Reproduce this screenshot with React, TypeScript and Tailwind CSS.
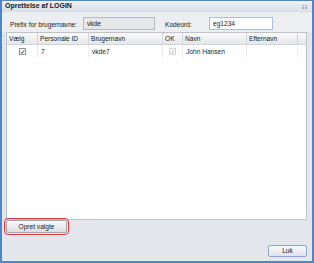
import React from "react";

const font = "font-['Liberation_Sans',Arial,sans-serif]";

function Check({ disabled }: { disabled?: boolean }) {
    return (
        <span
            className={`flex h-[7px] w-[7px] items-center justify-center border ${
                disabled ? "border-[#d2d4d8] bg-[#f4f5f6]" : "border-[#8e949c] bg-white"
            }`}
        >
            <svg width="6" height="6" viewBox="0 0 6 6">
                <path
                    d="M0.8 3.1 L2.3 4.6 L5.3 0.8"
                    fill="none"
                    stroke={disabled ? "#b9bcc1" : "#1c2430"}
                    strokeWidth="1"
                />
            </svg>
        </span>
    );
}

const cols = "grid grid-cols-[31px_51px_74px_20px_64px_51px_1fr]";

export default function App() {
    const headers = ["Vælg", "Personale ID", "Brugernavn", "OK", "Navn", "Efternavn", ""];

    return (
        <div className={`flex h-[263px] w-[314px] flex-col bg-[#4f86c6] px-[2px] pt-[1px] pb-[2px] text-[6.6px] text-[#141b24] ${font}`}>
            <div className="flex flex-1 flex-col bg-[#e3e6ea]">
                {/* title bar */}
                <div className="flex h-[11px] items-center justify-between bg-gradient-to-b from-[#eef1f5] to-[#d9dee5] pl-[3px] pr-[5px]">
                    <span className="text-[7px] font-bold text-[#141b24]">Oprettelse af LOGIN</span>
                    <span className="grid h-[4px] w-[5px] grid-cols-2 gap-[1px]">
                        <span className="bg-[#a9adb3]" />
                        <span className="bg-[#a9adb3]" />
                        <span className="bg-[#a9adb3]" />
                        <span className="bg-[#a9adb3]" />
                    </span>
                </div>

                {/* form */}
                <div className="flex h-[20px] items-start bg-[#eceef1] pt-[5px] pl-[8px]">
                    <span className="mt-[3px] w-[73px]">Prefix for brugernavne:</span>
                    <div className="flex h-[13px] w-[72px] items-center border border-[#b7bbc1] bg-[#e6e7e9] px-[3px]">vkde</div>
                    <span className="mt-[3px] ml-[10px] w-[44px]">Kodeord:</span>
                    <div className="flex h-[13px] w-[64px] items-center border border-[#a9bfd6] bg-white px-[3px]">eg1234</div>
                </div>

                {/* grid */}
                <div className="ml-[4px] mr-[5px] flex h-[188px] flex-col border border-[#bfc3c9] bg-white">
                    <div className={`${cols} h-[12px] border-b border-[#d0d3d7] bg-gradient-to-b from-[#fafafa] to-[#e6e7e9]`}>
                        {headers.map((h, i) => (
                            <div key={i} className="flex items-center border-r border-[#d2d4d8] pl-[2px] last:border-r-0">
                                {h}
                            </div>
                        ))}
                    </div>
                    <div className={`${cols} h-[13px]`}>
                        <div className="flex items-center justify-center border-r border-[#ececec]">
                            <Check />
                        </div>
                        <div className="flex items-center border-r border-[#ececec] pl-[3px]">7</div>
                        <div className="flex items-center border-r border-[#ececec] pl-[3px]">vkde7</div>
                        <div className="flex items-center justify-center border-r border-[#ececec]">
                            <Check disabled />
                        </div>
                        <div className="flex items-center border-r border-[#ececec] pl-[3px]">John Hansen</div>
                        <div className="border-r border-[#ececec]" />
                        <div />
                    </div>
                </div>

                {/* buttons */}
                <div className="ml-[4px]">
                    <button className="h-[13px] w-[61px] rounded-[2px] border border-[#a3a7ad] bg-gradient-to-b from-[#fbfbfb] to-[#dcdee1] text-[6.6px] text-[#141b24] outline outline-1 outline-offset-1 outline-[#e5343b]">
                        Opret valgte
                    </button>
                </div>
                <div className="flex-1" />
                <div className="mb-[4px] mr-[5px] flex justify-end">
                    <button className="h-[12px] w-[39px] rounded-[2px] border border-[#8fa7c2] bg-gradient-to-b from-[#fbfcfd] to-[#dde2e8] text-[6.6px] text-[#141b24]">
                        Luk
                    </button>
                </div>
            </div>
        </div>
    );
}
